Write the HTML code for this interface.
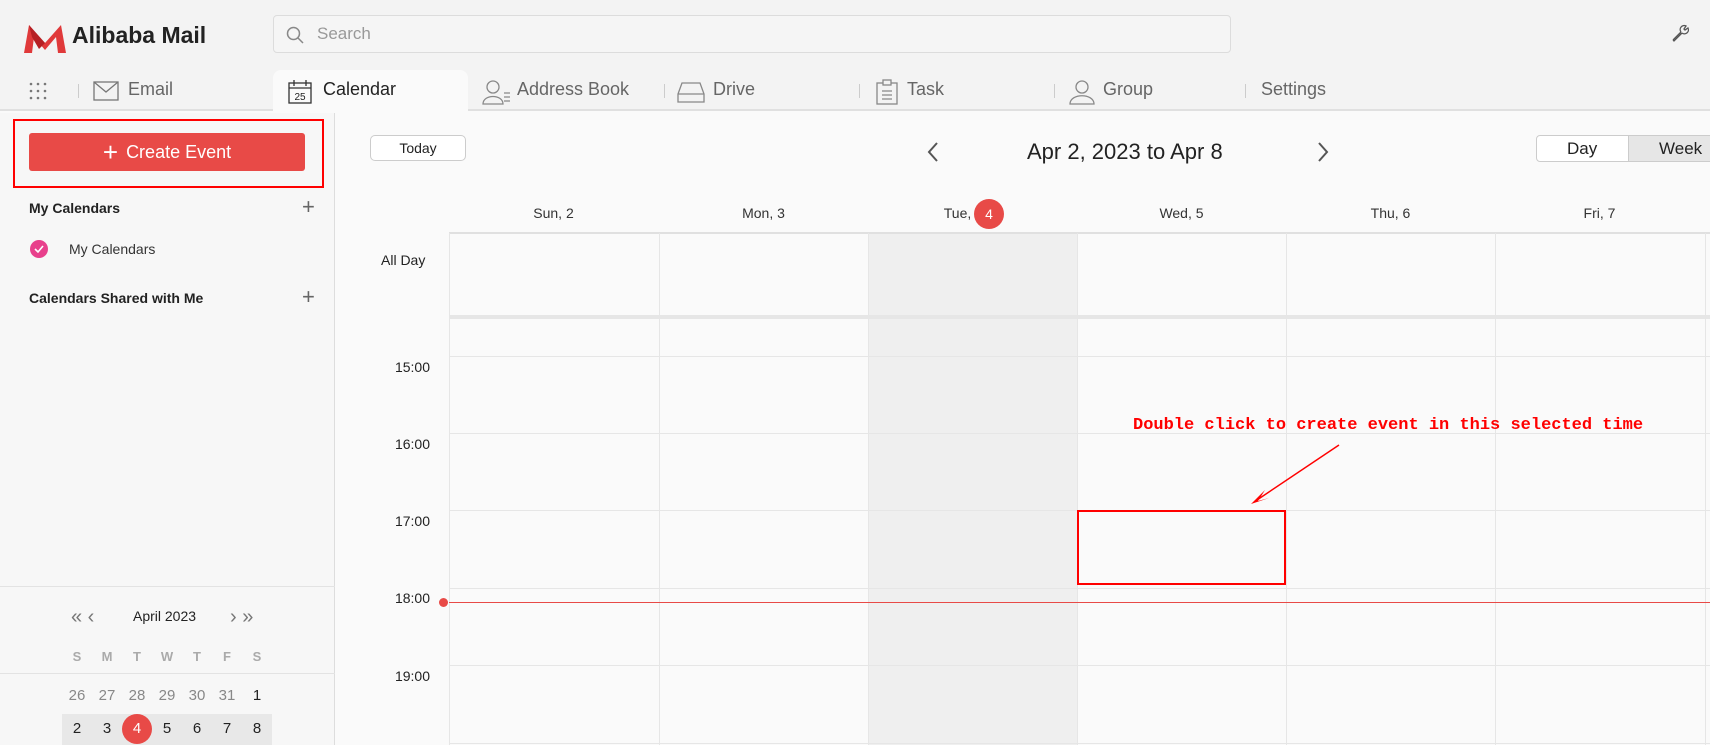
<!DOCTYPE html>
<html><head><meta charset="utf-8"><style>
*{margin:0;padding:0;box-sizing:border-box}
body{width:1710px;height:745px;overflow:hidden;background:#fafafa;font-family:"Liberation Sans",Arial,sans-serif;color:#222;position:relative}
.a{position:absolute;white-space:nowrap}
.tab{font-size:18px;color:#666;top:79px}
.hl{position:absolute;left:449px;width:1261px;height:1px;background:#e6e6e6}
.vl{position:absolute;top:233px;height:512px;width:1px;background:#e6e6e6}
.tl{position:absolute;left:380px;width:50px;text-align:right;font-size:14px;color:#222}
.dh{position:absolute;top:205px;width:209px;text-align:center;font-size:14px;color:#333}
.mc{position:absolute;width:30px;text-align:center;font-size:15px}
</style></head><body>
<!-- top bar -->
<div class="a" style="left:0;top:0;width:1710px;height:111px;background:#f3f3f3;border-bottom:2px solid #e0e0e0"></div>
<svg class="a" style="left:24px;top:23px" width="42" height="32" viewBox="0 0 42 32"><path d="M0 30 L5 2 L21 20 L37 2 L42 30 L34 30 L32 14 L21 27 L10 14 L8 30Z" fill="#e0393a"/><path d="M5 2 L21 20 L15 26 L8 14Z" fill="#b62024"/></svg>
<div class="a" style="left:72px;top:22px;font-size:23px;font-weight:bold;color:#222">Alibaba Mail</div>
<div class="a" style="left:273px;top:15px;width:958px;height:38px;border:1px solid #dcdcdc;border-radius:4px;background:#f5f5f5"></div>
<svg class="a" style="left:286px;top:26px" width="18" height="18" viewBox="0 0 18 18"><circle cx="7.5" cy="7.5" r="6" fill="none" stroke="#888" stroke-width="1.5"/><path d="M12 12 L17 17" stroke="#888" stroke-width="1.5"/></svg>
<div class="a" style="left:317px;top:24px;font-size:17px;color:#999">Search</div>
<svg class="a" style="left:1670px;top:23px" width="20" height="20" viewBox="0 0 20 20"><path d="M3 17 L11 9 M11 9 A4 4 0 0 1 16 3 L14 6 L15 7 L18 5 A4 4 0 0 1 12 10 M3 17 L4 18 L12 10" fill="none" stroke="#555" stroke-width="1.3"/></svg>
<!-- tabs -->
<div class="a" style="left:273px;top:70px;width:195px;height:43px;background:#fafafa;border-radius:8px 8px 0 0"></div>
<svg class="a" style="left:29px;top:82px" width="20" height="20"><g fill="#777"><circle cx="2" cy="2" r="1.3"/><circle cx="9" cy="2" r="1.3"/><circle cx="16" cy="2" r="1.3"/><circle cx="2" cy="9" r="1.3"/><circle cx="9" cy="9" r="1.3"/><circle cx="16" cy="9" r="1.3"/><circle cx="2" cy="16" r="1.3"/><circle cx="9" cy="16" r="1.3"/><circle cx="16" cy="16" r="1.3"/></g></svg>
<div class="a" style="left:78px;top:84px;width:1px;height:14px;background:#ccc"></div>
<svg class="a" style="left:93px;top:81px" width="26" height="20"><rect x="1" y="1" width="24" height="18" fill="none" stroke="#777" stroke-width="1.3"/><path d="M1 1 L13 11 L25 1" fill="none" stroke="#777" stroke-width="1.3"/></svg>
<div class="a tab" style="left:128px">Email</div>
<svg class="a" style="left:288px;top:79px" width="24" height="25"><rect x="1" y="4" width="22" height="20" fill="none" stroke="#333" stroke-width="1.3"/><path d="M6 1v6M18 1v6M1 9h22" stroke="#333" stroke-width="1.3"/><text x="12" y="21" font-size="10" text-anchor="middle" fill="#222" font-family="Liberation Sans">25</text></svg>
<div class="a tab" style="left:323px;color:#222">Calendar</div>
<svg class="a" style="left:482px;top:79px" width="30" height="26"><circle cx="11" cy="8" r="6" fill="none" stroke="#888" stroke-width="1.3"/><path d="M1 25 C1 15 21 15 21 25Z" fill="none" stroke="#888" stroke-width="1.3"/><path d="M22 14h6M22 18h6M22 22h6" stroke="#888" stroke-width="1.3"/></svg>
<div class="a tab" style="left:517px">Address Book</div>
<div class="a" style="left:664px;top:84px;width:1px;height:14px;background:#ccc"></div>
<svg class="a" style="left:677px;top:81px" width="28" height="22"><path d="M1 13 L5 2 H23 L27 13 V21 H1Z M1 13 H27" fill="none" stroke="#888" stroke-width="1.3"/></svg>
<div class="a tab" style="left:713px">Drive</div>
<div class="a" style="left:859px;top:84px;width:1px;height:14px;background:#ccc"></div>
<svg class="a" style="left:876px;top:79px" width="22" height="26"><rect x="1" y="4" width="20" height="21" fill="none" stroke="#888" stroke-width="1.3"/><rect x="7" y="1" width="8" height="5" fill="#f3f3f3" stroke="#888" stroke-width="1.3"/><path d="M6 12h10M6 16h10M6 20h10" stroke="#888" stroke-width="1.3"/></svg>
<div class="a tab" style="left:907px">Task</div>
<div class="a" style="left:1054px;top:84px;width:1px;height:14px;background:#ccc"></div>
<svg class="a" style="left:1067px;top:79px" width="30" height="26"><circle cx="15" cy="8" r="6" fill="none" stroke="#888" stroke-width="1.3"/><path d="M3 25 C3 14 27 14 27 25Z" fill="none" stroke="#888" stroke-width="1.3"/></svg>
<div class="a tab" style="left:1103px">Group</div>
<div class="a" style="left:1245px;top:84px;width:1px;height:14px;background:#ccc"></div>
<div class="a tab" style="left:1261px">Settings</div>
<!-- sidebar -->
<div class="a" style="left:0;top:113px;width:335px;height:632px;background:#f7f7f7;border-right:1px solid #ddd"></div>
<div class="a" style="left:13px;top:119px;width:311px;height:69px;border:2px solid #f00"></div>
<div class="a" style="left:29px;top:133px;width:276px;height:38px;background:#e84a47;border-radius:3px;color:#fff;font-size:18px;text-align:center;line-height:38px"><span style="font-size:26px;vertical-align:-3px;margin-right:8px">+</span>Create Event</div>
<div class="a" style="left:29px;top:200px;font-size:14px;font-weight:bold">My Calendars</div>
<div class="a" style="left:302px;top:194px;font-size:22px;color:#666;font-weight:300">+</div>
<div class="a" style="left:30px;top:240px;width:18px;height:18px;border-radius:50%;background:#e8408c"></div>
<svg class="a" style="left:33px;top:243px" width="12" height="12"><path d="M2 6 L5 9 L10 3" fill="none" stroke="#fff" stroke-width="1.6"/></svg>
<div class="a" style="left:69px;top:241px;font-size:14px;color:#333">My Calendars</div>
<div class="a" style="left:29px;top:290px;font-size:14px;font-weight:bold">Calendars Shared with Me</div>
<div class="a" style="left:302px;top:284px;font-size:22px;color:#666">+</div>
<div class="a" style="left:0;top:586px;width:335px;height:1px;background:#e3e3e3"></div>
<div class="a" style="left:71px;top:606px;font-size:20px;color:#777">« ‹</div>
<div class="a" style="left:133px;top:608px;font-size:14px">April 2023</div>
<div class="a" style="left:230px;top:606px;font-size:20px;color:#777">› »</div>
<div class="a" style="left:62px;top:649px;width:210px;display:flex;font-size:13px;font-weight:bold;color:#aaa"><span style="width:30px;text-align:center">S</span><span style="width:30px;text-align:center">M</span><span style="width:30px;text-align:center">T</span><span style="width:30px;text-align:center">W</span><span style="width:30px;text-align:center">T</span><span style="width:30px;text-align:center">F</span><span style="width:30px;text-align:center">S</span></div>
<div class="a" style="left:0;top:673px;width:335px;height:1px;background:#e3e3e3"></div>
<div class="a" style="left:62px;top:687px;width:210px;display:flex;font-size:15px;color:#888"><span style="width:30px;text-align:center">26</span><span style="width:30px;text-align:center">27</span><span style="width:30px;text-align:center">28</span><span style="width:30px;text-align:center">29</span><span style="width:30px;text-align:center">30</span><span style="width:30px;text-align:center">31</span><span style="width:30px;text-align:center;color:#222">1</span></div>
<div class="a" style="left:62px;top:714px;width:210px;height:31px;background:#e8e8e8"></div>
<div class="a" style="left:122px;top:714px;width:30px;height:30px;border-radius:50%;background:#e84a47"></div>
<div class="a" style="left:62px;top:720px;width:210px;display:flex;font-size:15px;color:#222"><span style="width:30px;text-align:center">2</span><span style="width:30px;text-align:center">3</span><span style="width:30px;text-align:center;color:#fff">4</span><span style="width:30px;text-align:center">5</span><span style="width:30px;text-align:center">6</span><span style="width:30px;text-align:center">7</span><span style="width:30px;text-align:center">8</span></div>
<!-- main header -->
<div class="a" style="left:370px;top:135px;width:96px;height:26px;border:1px solid #ccc;border-radius:5px;background:#fff;text-align:center;line-height:24px;font-size:14px">Today</div>
<svg class="a" style="left:926px;top:141px" width="14" height="22"><path d="M11 2 L3 11 L11 20" fill="none" stroke="#555" stroke-width="2"/></svg>
<div class="a" style="left:1027px;top:139px;font-size:22px;color:#222">Apr 2, 2023 to Apr 8</div>
<svg class="a" style="left:1316px;top:141px" width="14" height="22"><path d="M3 2 L11 11 L3 20" fill="none" stroke="#555" stroke-width="2"/></svg>
<div class="a" style="left:1536px;top:135px;width:180px;height:27px;border:1px solid #ccc;border-radius:4px;background:#fff"></div>
<div class="a" style="left:1628px;top:136px;width:82px;height:25px;background:#e6e6e6;border-left:1px solid #ccc"></div>
<div class="a" style="left:1567px;top:139px;font-size:17px">Day</div>
<div class="a" style="left:1659px;top:139px;font-size:17px">Week</div>
<div class="dh" style="left:449px">Sun, 2</div>
<div class="dh" style="left:659px">Mon, 3</div>
<div class="dh" style="left:868px;padding-right:30px">Tue,</div>
<div class="a" style="left:974px;top:199px;width:30px;height:30px;border-radius:50%;background:#e84a47;color:#fff;text-align:center;line-height:30px;font-size:14px">4</div>
<div class="dh" style="left:1077px">Wed, 5</div>
<div class="dh" style="left:1286px">Thu, 6</div>
<div class="dh" style="left:1495px">Fri, 7</div>
<!-- grid -->
<div class="a" style="left:868px;top:233px;width:209px;height:512px;background:#efefef"></div>
<div class="a" style="left:449px;top:232px;width:1261px;height:2px;background:#e0e0e0"></div>
<div class="a" style="left:449px;top:315px;width:1261px;height:4px;background:#e6e6e6"></div>
<div class="vl" style="left:449px"></div><div class="vl" style="left:659px"></div><div class="vl" style="left:868px"></div><div class="vl" style="left:1077px"></div><div class="vl" style="left:1286px"></div><div class="vl" style="left:1495px"></div><div class="vl" style="left:1705px"></div>
<div class="hl" style="top:356px"></div><div class="hl" style="top:433px"></div><div class="hl" style="top:510px"></div><div class="hl" style="top:588px"></div><div class="hl" style="top:665px"></div><div class="hl" style="top:743px"></div>
<div class="a" style="left:381px;top:252px;font-size:14px">All Day</div>
<div class="tl" style="top:359px">15:00</div>
<div class="tl" style="top:436px">16:00</div>
<div class="tl" style="top:513px">17:00</div>
<div class="tl" style="top:590px">18:00</div>
<div class="tl" style="top:668px">19:00</div>
<div class="a" style="left:449px;top:602px;width:1261px;height:1px;background:#e84a47"></div>
<div class="a" style="left:439px;top:598px;width:9px;height:9px;border-radius:50%;background:#e84a47"></div>
<div class="a" style="left:1077px;top:510px;width:209px;height:75px;border:2px solid #f00"></div>
<div class="a" style="left:1133px;top:416px;font-family:'Liberation Mono',monospace;font-weight:bold;font-size:17px;color:#f00">Double click to create event in this selected time</div>
<svg class="a" style="left:1245px;top:440px" width="100" height="70"><path d="M94 5 L12 60" stroke="#f00" stroke-width="1.5"/><path d="M6 64 L20 50 L13 61 L24 58Z" fill="#f00"/></svg>
</body></html>
